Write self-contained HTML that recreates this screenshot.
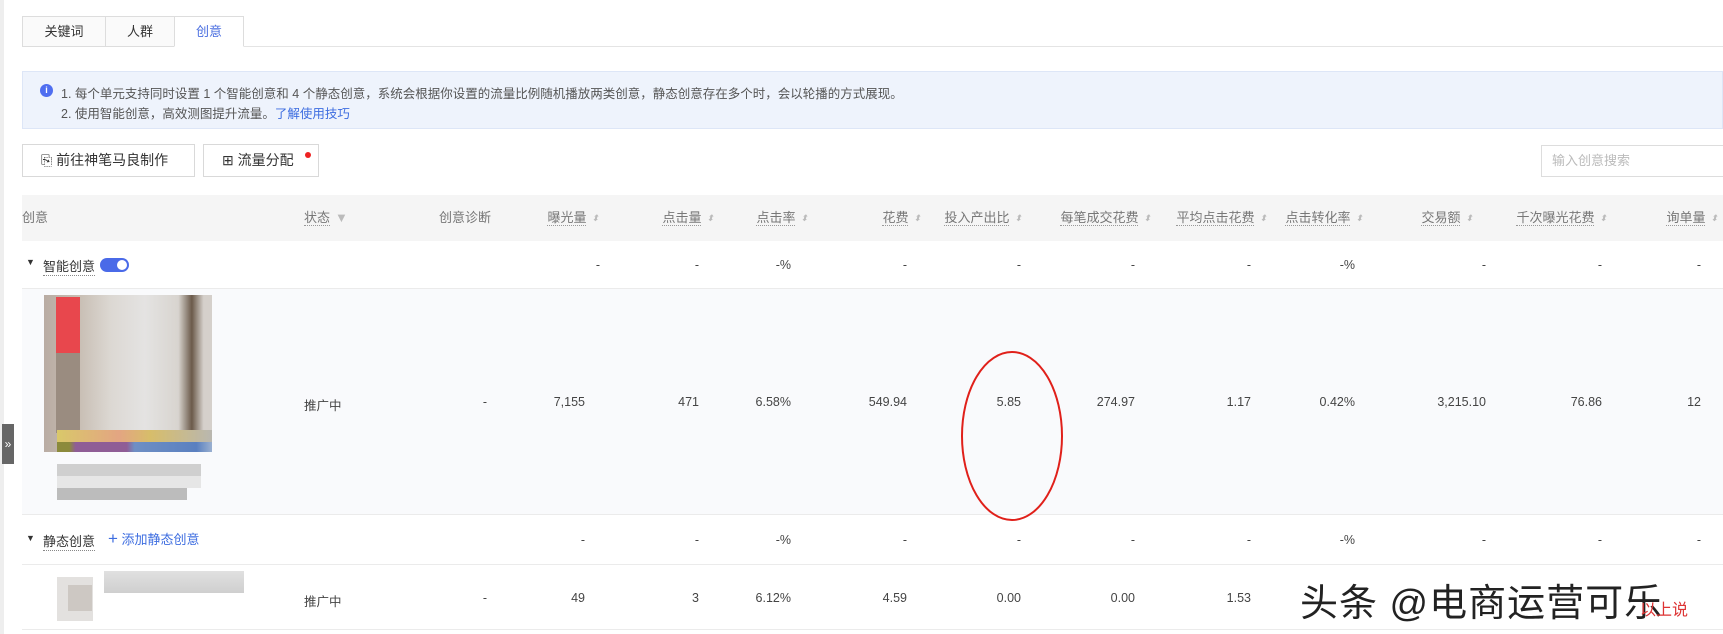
<!DOCTYPE html>
<html><head><meta charset="utf-8"><style>
*{margin:0;padding:0;box-sizing:border-box}
body{width:1723px;height:634px;overflow:hidden;background:#fff;font-family:"Liberation Sans","Noto Sans CJK SC",sans-serif;font-size:13px;color:#333;position:relative}
.a{position:absolute;white-space:nowrap}
.tab{position:absolute;top:16px;height:31px;border:1px solid #ddd;background:#fafafa;line-height:29px;text-align:center;color:#333}
.btn{position:absolute;top:144px;height:33px;border:1px solid #d9d9d9;background:#fff;line-height:31px;padding-left:18px;color:#333;font-size:14px}
.h{position:absolute;top:207px;color:#777;font-size:13px;white-space:nowrap}
.h span{border-bottom:1px dotted #999}
.s{display:inline-block;color:#bbb;font-size:9px;margin-left:5px;vertical-align:1px}
.v{position:absolute;white-space:nowrap;text-align:right;color:#444;font-size:12.5px}
.line{position:absolute;left:22px;right:0;height:1px;background:#ebebeb}
</style></head><body>
<div class="a" style="left:0;top:0;width:4px;height:634px;background:#eee"></div>
<div class="line" style="top:46px;background:#e4e4e4"></div>
<div class="tab" style="left:22px;width:84px">关键词</div>
<div class="tab" style="left:105px;width:70px">人群</div>
<div class="tab" style="left:174px;width:70px;background:#fff;border-bottom-color:#fff;color:#4a6ee0">创意</div>

<div class="a" style="left:22px;top:71px;width:1701px;height:58px;background:#eef3fc;border:1px solid #dde6f7"></div>
<div class="a" style="left:40px;top:84px;width:13px;height:13px;border-radius:50%;background:#4f6ef0;color:#fff;font-size:9px;text-align:center;line-height:13px;font-weight:bold">i</div>
<div class="a" style="left:61px;top:83px;color:#555;font-size:12.5px">1. 每个单元支持同时设置 1 个智能创意和 4 个静态创意，系统会根据你设置的流量比例随机播放两类创意，静态创意存在多个时，会以轮播的方式展现。</div>
<div class="a" style="left:61px;top:103px;color:#555;font-size:12.5px">2. 使用智能创意，高效测图提升流量。<span style="color:#3d6de0">了解使用技巧</span></div>

<div class="btn" style="left:22px;width:173px">⎘ 前往神笔马良制作</div>
<div class="btn" style="left:203px;width:116px">⊞ 流量分配</div>
<div class="a" style="left:305px;top:152px;width:6px;height:6px;border-radius:50%;background:#e22"></div>
<div class="a" style="left:1541px;top:145px;width:190px;height:32px;border:1px solid #ddd;color:#bbb;line-height:30px;padding-left:10px">输入创意搜索</div>

<div class="a" style="left:22px;top:195px;width:1701px;height:46px;background:#f5f5f5"></div>
<div class="h" style="left:22px">创意</div>
<div class="h" style="left:304px"><span>状态</span><span style="border:0;color:#bbb;margin-left:5px">▼</span></div>
<div class="h" style="left:439px">创意诊断</div>
<div class="h" style="right:1124px"><span>曝光量</span><i class="s">⬍</i></div>
<div class="h" style="right:1009px"><span>点击量</span><i class="s">⬍</i></div>
<div class="h" style="right:915px"><span>点击率</span><i class="s">⬍</i></div>
<div class="h" style="right:802px"><span>花费</span><i class="s">⬍</i></div>
<div class="h" style="right:701px"><span>投入产出比</span><i class="s">⬍</i></div>
<div class="h" style="right:572px"><span>每笔成交花费</span><i class="s">⬍</i></div>
<div class="h" style="right:456px"><span>平均点击花费</span><i class="s">⬍</i></div>
<div class="h" style="right:360px"><span>点击转化率</span><i class="s">⬍</i></div>
<div class="h" style="right:250px"><span>交易额</span><i class="s">⬍</i></div>
<div class="h" style="right:116px"><span>千次曝光花费</span><i class="s">⬍</i></div>
<div class="h" style="right:5px"><span>询单量</span><i class="s">⬍</i></div>

<div class="line" style="top:288px"></div>
<div class="a" style="left:22px;top:289px;width:1701px;height:225px;background:#f9fafc"></div>
<div class="line" style="top:514px"></div>
<div class="line" style="top:564px"></div>
<div class="line" style="top:629px"></div>

<div class="a" style="left:26px;top:257px;font-size:9px;color:#333">▼</div>
<div class="a" style="left:43px;top:256px;border-bottom:1px dotted #888">智能创意</div>
<div class="a" style="left:100px;top:258px;width:29px;height:14px;border-radius:7px;background:#4a6ae8"></div>
<div class="a" style="left:117px;top:260px;width:10px;height:10px;border-radius:50%;background:#fff"></div>

<div class="a" style="left:26px;top:533px;font-size:9px;color:#333">▼</div>
<div class="a" style="left:43px;top:531px;border-bottom:1px dotted #888">静态创意</div>
<div class="a" style="left:108px;top:529px;color:#3d6de0;font-size:13px"><span style="font-size:17px">+</span> 添加静态创意</div>

<!-- big image -->
<div class="a" style="left:44px;top:295px;width:168px;height:157px;background:linear-gradient(90deg,#b9aca3 0%,#c7bdb2 20%,#dcd8d3 40%,#e4e3e2 60%,#d8d4cf 80%,#6b5a4a 88%,#d5d0cb 95%)"></div>
<div class="a" style="left:56px;top:297px;width:24px;height:56px;background:#e8474d"></div>
<div class="a" style="left:56px;top:353px;width:24px;height:80px;background:#9a8c80"></div>
<div class="a" style="left:57px;top:430px;width:155px;height:12px;background:linear-gradient(90deg,#d9c86a,#e3a582 40%,#d7bd6a 60%,#b9b7b0)"></div>
<div class="a" style="left:57px;top:442px;width:155px;height:10px;background:linear-gradient(90deg,#8b8a3c 8%,#8f5d96 12%,#8f5d96 45%,#6e8fc4 50%,#5a80c0 90%,#9ab0d0)"></div>
<div class="a" style="left:57px;top:464px;width:144px;height:12px;background:#cfcfcf"></div>
<div class="a" style="left:57px;top:476px;width:144px;height:12px;background:#e6e6e6"></div>
<div class="a" style="left:57px;top:488px;width:130px;height:12px;background:#bcbcbc"></div>
<!-- small image -->
<div class="a" style="left:57px;top:577px;width:36px;height:44px;background:#e3e1df"></div>
<div class="a" style="left:68px;top:585px;width:24px;height:26px;background:#cdc8c3"></div>
<div class="a" style="left:104px;top:571px;width:140px;height:22px;background:linear-gradient(#e0e0e0,#cfcfcf)"></div>

<div class="v" style="right:1123px;top:258px">-</div>
<div class="v" style="right:1024px;top:258px">-</div>
<div class="v" style="right:932px;top:258px">-%</div>
<div class="v" style="right:816px;top:258px">-</div>
<div class="v" style="right:702px;top:258px">-</div>
<div class="v" style="right:588px;top:258px">-</div>
<div class="v" style="right:472px;top:258px">-</div>
<div class="v" style="right:368px;top:258px">-%</div>
<div class="v" style="right:237px;top:258px">-</div>
<div class="v" style="right:121px;top:258px">-</div>
<div class="v" style="right:22px;top:258px">-</div>

<div class="v" style="left:304px;top:395px">推广中</div>
<div class="v" style="right:1236px;top:395px">-</div>
<div class="v" style="right:1138px;top:395px">7,155</div>
<div class="v" style="right:1024px;top:395px">471</div>
<div class="v" style="right:932px;top:395px">6.58%</div>
<div class="v" style="right:816px;top:395px">549.94</div>
<div class="v" style="right:702px;top:395px">5.85</div>
<div class="v" style="right:588px;top:395px">274.97</div>
<div class="v" style="right:472px;top:395px">1.17</div>
<div class="v" style="right:368px;top:395px">0.42%</div>
<div class="v" style="right:237px;top:395px">3,215.10</div>
<div class="v" style="right:121px;top:395px">76.86</div>
<div class="v" style="right:22px;top:395px">12</div>

<div class="v" style="right:1138px;top:533px">-</div>
<div class="v" style="right:1024px;top:533px">-</div>
<div class="v" style="right:932px;top:533px">-%</div>
<div class="v" style="right:816px;top:533px">-</div>
<div class="v" style="right:702px;top:533px">-</div>
<div class="v" style="right:588px;top:533px">-</div>
<div class="v" style="right:472px;top:533px">-</div>
<div class="v" style="right:368px;top:533px">-%</div>
<div class="v" style="right:237px;top:533px">-</div>
<div class="v" style="right:121px;top:533px">-</div>
<div class="v" style="right:22px;top:533px">-</div>

<div class="v" style="left:304px;top:591px">推广中</div>
<div class="v" style="right:1236px;top:591px">-</div>
<div class="v" style="right:1138px;top:591px">49</div>
<div class="v" style="right:1024px;top:591px">3</div>
<div class="v" style="right:932px;top:591px">6.12%</div>
<div class="v" style="right:816px;top:591px">4.59</div>
<div class="v" style="right:702px;top:591px">0.00</div>
<div class="v" style="right:588px;top:591px">0.00</div>
<div class="v" style="right:472px;top:591px">1.53</div>

<div class="a" style="left:2px;top:424px;width:12px;height:40px;background:#666;color:#fff;font-size:12px;line-height:40px;text-align:center">»</div>

<svg class="a" style="left:0;top:0" width="1723" height="634"><ellipse cx="1012" cy="436" rx="50" ry="84" fill="none" stroke="#e0201a" stroke-width="2"/></svg>

<div class="a" style="left:1300px;top:572px;font-size:38px;color:#222;text-shadow:0 0 3px #fff,0 0 3px #fff;letter-spacing:1px">头条 @电商运营可乐</div>
<div class="a" style="left:1640px;top:596px;font-size:16px;color:#d33">以上说</div>
</body></html>
